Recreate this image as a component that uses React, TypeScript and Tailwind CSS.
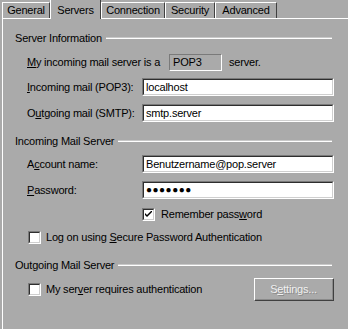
const font = { fontFamily: '"Liberation Sans", Arial, sans-serif' };

function Tab({ label, w, active }: { label: string; w: string; active?: boolean }) {
  if (active) {
    return (
      <div
        className={`relative z-10 -mb-px flex h-[20px] items-start justify-center border-l border-t border-white border-r-[#404040] border-r bg-[#aaaaaa] pt-[2px] ${w}`}
      >
        {label}
      </div>
    );
  }
  return (
    <div
      className={`flex h-[16px] items-center justify-center border-l border-t border-white border-r border-r-[#404040] bg-[#aaaaaa] ${w}`}
    >
      {label}
    </div>
  );
}

function GroupHeader({ title, mt }: { title: string; mt: string }) {
  return (
    <div className={`flex h-[14px] items-center pl-[12px] pr-[16px] ${mt}`}>
      <span>{title}</span>
      <div className="ml-[4px] flex flex-1 flex-col">
        <div className="h-px bg-[#c8c8c8]" />
        <div className="h-px bg-white" />
      </div>
    </div>
  );
}

function Sunken({ children, className }: { children?: React.ReactNode; className: string }) {
  return (
    <div className={`border border-t-[#7a7a7a] border-l-[#7a7a7a] border-b-white border-r-white ${className}`}>
      <div className="flex h-full items-center border border-t-[#2e2e2e] border-l-[#2e2e2e] border-b-[#cfcfcf] border-r-[#cfcfcf] bg-white pl-[2px]">
        {children}
      </div>
    </div>
  );
}

function Checkbox({ checked }: { checked?: boolean }) {
  return (
    <div className="h-[13px] w-[13px] shrink-0 border border-t-[#7a7a7a] border-l-[#7a7a7a] border-b-white border-r-white">
      <div className="flex h-full w-full items-center justify-center border border-t-[#2e2e2e] border-l-[#2e2e2e] border-b-[#cfcfcf] border-r-[#cfcfcf] bg-white">
        {checked && (
          <svg width="7" height="7" viewBox="0 0 7 7">
            <path d="M0 2 L0 4 L2 6 L7 1 L7 -1 L2 4 Z" fill="#000" />
          </svg>
        )}
      </div>
    </div>
  );
}

function FieldRow({ label, value, mt }: { label: React.ReactNode; value: React.ReactNode; mt: string }) {
  return (
    <div className={`flex h-[18px] items-center pl-[24px] pr-[14px] ${mt}`}>
      <div className="w-[115px]">{label}</div>
      <Sunken className="h-[18px] w-[192px]">{value}</Sunken>
    </div>
  );
}

export default function App() {
  return (
    <div
      className="h-[329px] w-[348px] overflow-hidden bg-[#aaaaaa] text-[11px] tracking-[-0.2px] text-black"
      style={font}
    >
      {/* Tabs */}
      <div className="flex h-[18px] items-end pl-[2px]">
        <Tab label="General" w="w-[48px]" />
        <Tab label="Servers" w="w-[51px]" active />
        <Tab label="Connection" w="w-[64px]" />
        <Tab label="Security" w="w-[50px]" />
        <Tab label="Advanced" w="w-[62px]" />
      </div>

      {/* Panel */}
      <div className="ml-[2px] h-[311px] border-l border-t border-white">
        <GroupHeader title="Server Information" mt="mt-[12px]" />

        <div className="mt-[9px] flex h-[17px] items-center pl-[24px]">
          <span className="w-[142px]">
            <u>M</u>y incoming mail server is a
          </span>
          <div className="flex h-[17px] w-[53px] items-center border border-t-[#7a7a7a] border-l-[#7a7a7a] border-b-white border-r-white pl-[3px]">
            POP3
          </div>
          <span className="ml-[7px]">server.</span>
        </div>

        <FieldRow
          mt="mt-[7px]"
          label={
            <>
              <u>I</u>ncoming mail (POP3):
            </>
          }
          value="localhost"
        />
        <FieldRow
          mt="mt-[8px]"
          label={
            <>
              O<u>u</u>tgoing mail (SMTP):
            </>
          }
          value="smtp.server"
        />

        <GroupHeader title="Incoming Mail Server" mt="mt-[12px]" />

        <FieldRow
          mt="mt-[7px]"
          label={
            <>
              A<u>c</u>count name:
            </>
          }
          value="Benutzername@pop.server"
        />
        <FieldRow
          mt="mt-[8px]"
          label={
            <>
              <u>P</u>assword:
            </>
          }
          value={<span className="text-[10px] leading-none tracking-[0.5px]">●●●●●●●</span>}
        />

        <div className="mt-[9px] flex h-[13px] items-center pl-[139px]">
          <Checkbox checked />
          <span className="ml-[6px]">
            Remember pass<u>w</u>ord
          </span>
        </div>

        <div className="mt-[10px] flex h-[13px] items-center pl-[25px]">
          <Checkbox />
          <span className="ml-[5px]">
            Log on using <u>S</u>ecure Password Authentication
          </span>
        </div>

        <GroupHeader title="Outgoing Mail Server" mt="mt-[14px]" />

        <div className="mt-[6px] flex h-[23px] items-center pl-[25px] pr-[14px]">
          <Checkbox />
          <span className="ml-[5px] flex-1">
            My ser<u>v</u>er requires authentication
          </span>
          <div className="h-[23px] w-[80px] border border-t-white border-l-white border-b-[#404040] border-r-[#404040]">
            <div className="flex h-full items-center justify-center border-b border-r border-[#8a8a8a] text-[#f0f0f0] [text-shadow:1px_1px_0_#8c8c8c]">
              S<u>e</u>ttings...
            </div>
          </div>
        </div>
      </div>
    </div>
  );
}
